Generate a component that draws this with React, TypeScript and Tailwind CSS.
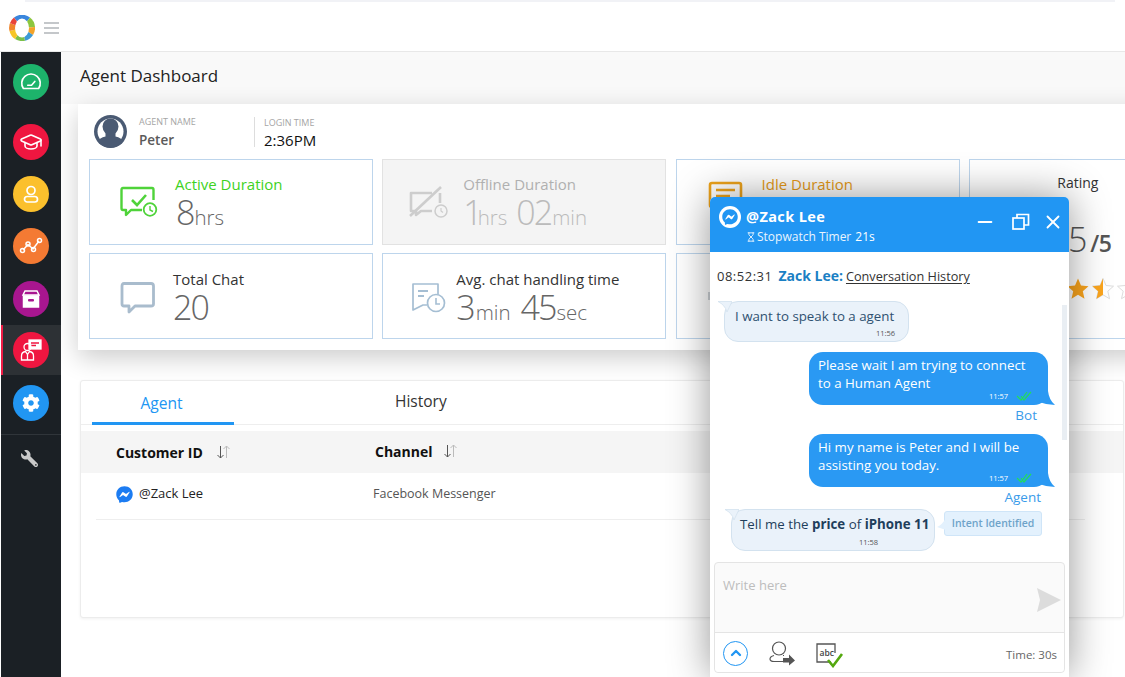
import React from 'react';
import { FaCog, FaFacebookMessenger, FaWrench } from 'react-icons/fa';
import { Hourglass, GraduationCap, ChevronUp, X, Minus } from 'lucide-react';

const Circle: React.FC<{ bg: string; children: React.ReactNode }> = ({ bg, children }) => (
  <div className={`w-9 h-9 rounded-full flex items-center justify-center text-white ${bg}`}>{children}</div>
);

const SideItem: React.FC<{ active?: boolean; className?: string; children: React.ReactNode }> = ({ active, className = '', children }) => (
  <div className={`h-[50px] flex items-center pl-[10px] border-l-2 ${active ? 'bg-[#2d3135] border-[#ef1b45]' : 'border-transparent'} ${className}`}>
    {children}
  </div>
);

const Sidebar = () => (
  <div className="w-[60px] ml-px bg-[#1b2025] pt-[5px] shrink-0">
    <SideItem>
      <Circle bg="bg-[#1db36b]">
        <svg width="24" height="24" viewBox="0 0 22 22" fill="none" stroke="white" strokeWidth="1.5">
          <path d="M4 17 a8.5 8.5 0 1 1 14 0 z" strokeLinejoin="round" />
          <path d="M8 14 h3.5 l3-3.5" strokeLinecap="round" />
        </svg>
      </Circle>
    </SideItem>
    <SideItem className="mt-[10px]">
      <Circle bg="bg-[#ef1640]"><GraduationCap size={24} strokeWidth={1.6} /></Circle>
    </SideItem>
    <SideItem className="mt-[2px]">
      <Circle bg="bg-[#fbc02d]">
        <svg width="20" height="20" viewBox="0 0 20 20" fill="none" stroke="white" strokeWidth="1.7">
          <circle cx="10" cy="6.5" r="4" />
          <rect x="3.5" y="12.5" width="13" height="5.5" rx="2.7" />
        </svg>
      </Circle>
    </SideItem>
    <SideItem className="mt-[2px]">
      <Circle bg="bg-[#f47a33]">
        <svg width="24" height="20" viewBox="0 0 24 20" fill="none" stroke="white" strokeWidth="1.5">
          <path d="M4 14 L9 8.5 L14 13 L20 5" />
          <circle cx="3.5" cy="14.5" r="2" />
          <circle cx="9" cy="8" r="2" />
          <circle cx="14.5" cy="13.5" r="2" />
          <circle cx="20.5" cy="4.5" r="2" />
        </svg>
      </Circle>
    </SideItem>
    <SideItem className="mt-[3px]">
      <Circle bg="bg-[#a8168f]">
        <svg width="22" height="22" viewBox="0 0 22 22" fill="none" stroke="white" strokeWidth="1.5">
          <path d="M5 3 h12 l2 4 H3 z" />
          <rect x="3.5" y="8" width="15" height="11" fill="white" />
          <rect x="8" y="11" width="6" height="2.5" rx="1" fill="#a8168f" stroke="none" />
        </svg>
      </Circle>
    </SideItem>
    <SideItem active className="mt-px">
      <Circle bg="bg-[#ef1640]">
        <svg width="26" height="26" viewBox="0 0 26 26" fill="none" stroke="white" strokeWidth="1.3">
          <rect x="11" y="3" width="12" height="9" fill="white" />
          <path d="M13 6 h8 M13 8.5 h5" stroke="#ef1640" />
          <circle cx="9.5" cy="10" r="3.5" />
          <path d="M3.5 23 v-4 q0-4 4-4.5 l2 3 2-3 q4 .5 4 4.5 v4 z" />
          <path d="M9.5 18 v5" />
        </svg>
      </Circle>
    </SideItem>
    <SideItem className="mt-[3px]">
      <Circle bg="bg-[#2196f3]"><FaCog size={18} /></Circle>
    </SideItem>
    <div className="mt-[6px] border-t border-[#30353a] pt-[15px] flex pl-[20px]">
      <FaWrench size={17} className="text-[#c9c9c9] -scale-x-100" />
    </div>
  </div>
);

const Big: React.FC<{ className?: string; children: React.ReactNode }> = ({ className = '', children }) => (
  <span className={`font-light text-[34px] leading-none tracking-[-2px] ${className}`}>{children}</span>
);
const Unit: React.FC<{ className?: string; children: React.ReactNode }> = ({ className = '', children }) => (
  <span className={`font-light text-[20.500px] leading-none ${className}`}>{children}</span>
);

const StatCard: React.FC<{
  icon: React.ReactNode;
  iconClass: string;
  title: string;
  titleClass?: string;
  muted?: boolean;
  className?: string;
  children?: React.ReactNode;
}> = ({ icon, iconClass, title, titleClass = 'text-[#333]', muted, className = '', children }) => (
  <div className={`h-[86px] border flex items-center ${muted ? 'bg-[#f4f4f4] border-[#e2e2e2]' : 'bg-white border-[#bdd5ec]'} ${className}`}>
    <div className={`shrink-0 flex ${iconClass}`}>{icon}</div>
    <div className="flex flex-col">
      <div className={`text-[15px] leading-[20px] font-medium ${titleClass}`}>{title}</div>
      <div className={`h-[36px] flex items-baseline mt-[1px] ${muted ? 'text-[#bbb]' : 'text-[#666]'}`}>{children}</div>
    </div>
  </div>
);

const Stars = () => {
  const star = 'M12 1.5 L15 8.5 L22.5 9.2 L16.8 14.2 L18.5 21.7 L12 17.8 L5.5 21.7 L7.2 14.2 L1.5 9.2 L9 8.5 Z';
  return (
    <div className="flex justify-center gap-px">
      {[0, 1, 2].map(i => (
        <svg key={i} width="24" height="24" viewBox="0 0 24 24"><path d={star} fill="#fba51d" /></svg>
      ))}
      <svg width="24" height="24" viewBox="0 0 24 24">
        <path d={star} fill="white" stroke="#ddd" />
        <path d="M12 1.5 L9 8.5 L1.5 9.2 L7.2 14.2 L5.5 21.7 L12 17.8 Z" fill="#fba51d" />
      </svg>
      <svg width="24" height="24" viewBox="0 0 24 24"><path d={star} fill="white" stroke="#ddd" /></svg>
    </div>
  );
};

const Stats = () => (
  <div className="grid grid-cols-[284px_284px_284px_284px] gap-x-[9.3px] gap-y-2">
    <StatCard
      title="Active Duration"
      titleClass="text-[#3fd21f]"
      iconClass="ml-[30px] w-[55px]"
      icon={
        <svg width="38" height="32" viewBox="0 0 38 32" fill="none" stroke="#4fd33a" strokeWidth="2.4">
          <path d="M22 24 H11 L6 29 V24 H3 Q1.5 24 1.5 22 V4 Q1.5 2 3 2 H32 Q33.5 2 33.5 4 V14" strokeLinejoin="round" />
          <path d="M12 14 l5 5 9-10" strokeWidth="2.6" />
          <circle cx="30" cy="23.5" r="6.3" strokeWidth="1.8" fill="white" />
          <path d="M30 20 v4 l3 1.5" strokeWidth="1.4" />
        </svg>
      }
    >
      <Big className="ml-[1px]">8</Big><Unit className="ml-[1px]">hrs</Unit>
    </StatCard>
    <StatCard
      muted
      title="Offline Duration"
      titleClass="text-[#b0b0b0]"
      iconClass="ml-[25px] w-[55px]"
      icon={
        <svg width="40" height="34" viewBox="0 0 40 34" fill="none" stroke="#cdcdcd" strokeWidth="2.6">
          <path d="M24 8 H3 V26 H8 V30 L13 26 H24 M32 8 V18" strokeLinejoin="round" />
          <path d="M2 31 L33 2" />
          <circle cx="33" cy="26" r="6" strokeWidth="1.5" fill="#f4f4f4" />
          <path d="M33 23 v3 l2 1.5" strokeWidth="1.2" />
        </svg>
      }
    >
      <Big>1</Big><Unit className="-ml-[3px]">hrs</Unit><Big className="ml-[9px]">02</Big><Unit className="ml-[1px]">min</Unit>
    </StatCard>
    <StatCard
      title="Idle Duration"
      titleClass="text-[#e69a17]"
      iconClass="ml-[31px] w-[54px]"
      icon={
        <svg width="36" height="36" viewBox="0 0 36 36" fill="none" stroke="#eda31c" strokeWidth="2.6" className="-mt-3">
          <rect x="2" y="5" width="31" height="24" rx="2" />
          <path d="M8 12 h19 M8 18 h14" />
        </svg>
      }
    />
    <div className="row-span-2 h-[180px] border border-[#bdd5ec] bg-white flex flex-col items-center pt-[13px] pr-[66px]">
      <div className="text-[14px] leading-[20px] text-[#333]">Rating</div>
      <div className="mt-[29px] h-[40px] flex items-baseline text-[#555]">
        <Big>3.5</Big>
        <span className="ml-[5px] text-[23px] leading-none font-semibold tracking-tight">/5</span>
      </div>
      <div className="mt-[15px]"><Stars /></div>
    </div>
    <StatCard
      className="pt-[3px]"
      title="Total Chat"
      iconClass="ml-[30px] w-[53px]"
      icon={
        <svg width="36" height="34" viewBox="0 0 36 34" fill="none" stroke="#a9bccd" strokeWidth="2.8">
          <path d="M4 2.5 H31 Q33.5 2.5 33.5 5 V23 Q33.5 25 31 25 H15 L9 31 V25 H4 Q2 25 2 23 V5 Q2 2.500 4 2.5 Z" strokeLinejoin="round" />
        </svg>
      }
    >
      <Big>20</Big>
    </StatCard>
    <StatCard
      className="pt-[3px]"
      title="Avg. chat handling time"
      iconClass="ml-[28px] w-[45px]"
      icon={
        <svg width="36" height="32" viewBox="0 0 36 32" fill="none" stroke="#a5bed3" strokeWidth="1.7">
          <path d="M27 13 V2 H2 V28 L12 23 H16" strokeLinejoin="round" />
          <path d="M7 9 h10 M7 14 h6" strokeWidth="1.8" />
          <circle cx="25" cy="21" r="8.500" fill="white" />
          <path d="M25 16 v6 h4" strokeWidth="1.6" />
        </svg>
      }
    >
      <Big>3</Big><Unit className="ml-[2px]">min</Unit><Big className="ml-[10px]">45</Big><Unit className="ml-[1px]">sec</Unit>
    </StatCard>
    <StatCard
      title=""
      iconClass="ml-[31px] w-[54px]"
      icon={
        <svg width="30" height="8" viewBox="0 0 30 8" fill="none" stroke="#cfd4d8" strokeWidth="2">
          <rect x="1" y="1" width="26" height="12" />
        </svg>
      }
    />
  </div>
);

const SortIcon = () => (
  <svg width="15" height="14" viewBox="0 0 15 14" fill="none" strokeWidth="1">
    <path d="M4.500 1 V13 M1.500 10 L4.500 13 L7.500 10" stroke="#555" />
    <path d="M10.500 13 V1 M7.500 4 L10.500 1 L13.500 4" stroke="#bbb" />
  </svg>
);

const Table = () => (
  <div className="mt-[30px] ml-[19px] w-[1044px] h-[238px] bg-white border border-[#ececec] rounded-[3px] shadow-[0_1px_3px_rgba(0,0,0,0.06)]">
    <div className="h-[44px] border-b border-[#eee] pl-[11px] flex">
      <div className="w-[142px] h-[44px] border-b-[3px] border-[#2196f3] text-[15.600px] text-[#2196f3] flex justify-center pt-[10px] pr-[3px] leading-[24px]">Agent</div>
      <div className="ml-[161px] text-[15.500px] leading-[24px] pt-[8px] text-[#333]">History</div>
    </div>
    <div className="mt-[6px] h-[42px] bg-[#f5f5f5] flex items-center text-[14px] font-bold text-[#111]">
      <div className="w-[294px] pl-[35px] flex items-center gap-[13px]">Customer ID <SortIcon /></div>
      <div className="flex items-center gap-[10px] -mt-[2px]">Channel <SortIcon /></div>
    </div>
    <div className="ml-[15px] mr-[38px] h-[47px] border-b border-[#eee] pl-[20px] pb-[4px] flex items-center text-[12.500px]">
      <div className="w-[257px] flex items-center gap-[6px] text-[#222]">
        <FaFacebookMessenger size={17} className="text-[#1c7cf2]" /> <span className="text-[13px]">@Zack Lee</span>
      </div>
      <div className="text-[#555]">Facebook Messenger</div>
    </div>
  </div>
);

const TailLeft: React.FC<{ className?: string }> = ({ className = '' }) => (
  <svg width="14" height="12" viewBox="0 0 14 12" className={`absolute ${className}`}>
    <path d="M0 .5 H14 L9 11 Q7 4 0 .5 Z" fill="#eaf2fa" stroke="#d3e2ef" strokeWidth="0.8" />
  </svg>
);

const Checks = () => (
  <svg width="17" height="10" viewBox="0 0 17 10" fill="none" stroke="#22dd5a" strokeWidth="1.2">
    <path d="M1 5 L5 9 L11 1 M5 5 L8 9 L15 1" />
  </svg>
);

const Outgoing: React.FC<{ lines: string[]; label: string; labelClass: string }> = ({ lines, label, labelClass }) => (
  <div className="flex flex-col items-end">
    <div className="relative w-[239px] h-[53px] mr-[21px] bg-[#2a99f3] rounded-[14px] pl-[9px] pt-[4px] text-white text-[13.300px] leading-[18px]">
      {lines.map(l => <div key={l}>{l}</div>)}
      <div className="absolute right-[15px] bottom-[4px] flex items-center gap-[8px] text-[7.500px] leading-[10px]">11:57 <Checks /></div>
      <svg width="16" height="14" viewBox="0 0 16 14" className="absolute -right-[7px] bottom-0">
        <path d="M2 0 H9 Q10 9 16 14 Q8 14 0 11 Z" fill="#2a99f3" />
      </svg>
    </div>
    <div className={`text-[13.500px] leading-[18px] text-[#3a9bea] mt-px ${labelClass}`}>{label}</div>
  </div>
);

const ChatWindow = () => (
  <div className="absolute left-[710px] top-[197px] w-[359px] h-[480px] bg-white rounded-t-[5px] shadow-[0_0_40px_rgba(0,0,0,0.42)] flex flex-col">
    <div className="h-[55px] shrink-0 bg-[#2196f3] rounded-t-[5px] flex text-white pl-[9px] pr-[5px] pt-[9px]">
      <div className="w-[22px] h-[22px] rounded-full bg-white flex items-center justify-center text-[#2196f3] mr-[5px]">
        <FaFacebookMessenger size={16} />
      </div>
      <div className="flex-1">
        <div className="text-[14.500px] font-bold leading-[22px] tracking-[0.4px]">@Zack Lee</div>
        <div className="text-[12px] leading-[18px] flex items-center">
          <Hourglass size={10} className="mr-[1px]" />
          <span className="opacity-90">Stopwatch Timer</span><span className="ml-[4px] font-medium">21s</span>
        </div>
      </div>
      <div className="flex items-start pt-[5px]">
        <Minus size={22} strokeWidth={2} />
        <svg width="18" height="18" viewBox="0 0 18 18" fill="none" stroke="white" strokeWidth="1.7" className="mt-[2px] ml-[16px]">
          <rect x="1" y="5" width="11" height="11" />
          <path d="M5 5 V1.500 H16.500 V12 H12" />
        </svg>
        <X size={22} strokeWidth={2} className="ml-[12px]" />
      </div>
    </div>

    <div className="relative flex-1 flex flex-col">
      <div className="absolute left-[352px] top-[53px] w-[5px] h-[135px] bg-[#e9eef3]" />
      <div className="pl-[7px] pt-[15px] text-[12.700px] leading-[18px] text-[#333] flex">
        <span className="tracking-[0.5px] text-[13px]">08:52:31</span>
        <span className="ml-[6px] font-bold text-[#1a7fc4] text-[14px]">Zack Lee:</span>
        <span className="ml-[3px] underline underline-offset-2">Conversation History</span>
      </div>
      <div className="relative mt-[16px] ml-[14px] w-[185px] h-[41px] bg-[#eaf2fa] border border-[#d3e2ef] rounded-[14px] pl-[10px] pt-[4px] text-[13.300px] leading-[20px] text-[#2f5170]">
        <TailLeft className="-left-[7px] -top-px" />
        <span className="relative">I want to speak to a agent</span>
        <div className="absolute right-[13px] bottom-[3px] text-[7.500px] leading-[10px] text-[#555]">11:56</div>
      </div>
      <div className="mt-[10px] flex flex-col gap-[10px]">
        <Outgoing lines={['Please wait I am trying to connect', 'to a Human Agent']} label="Bot" labelClass="mr-[32px]" />
        <Outgoing lines={['Hi my name is Peter and I will be', 'assisting you today.']} label="Agent" labelClass="mr-[28px]" />
      </div>
      <div className="mt-[3px] flex items-start">
        <div className="relative ml-[21px] w-[204px] h-[42px] bg-[#eaf2fa] border border-[#d3e2ef] rounded-[14px] pl-[8px] pt-[4px] text-[13.300px] leading-[20px] text-[#1f3f5c] whitespace-nowrap">
          <TailLeft className="-left-[7px] -top-px" />
          <span className="relative">Tell me the <b>price</b> of <b>iPhone 11</b></span>
          <div className="absolute left-[127px] bottom-[3px] text-[7.500px] leading-[10px] text-[#555]">11:58</div>
        </div>
        <div className="relative ml-[9px] mt-[2px] w-[98px] h-[25px] bg-[#e3f1fd] border border-[#cfe5f8] rounded-[3px] flex items-center justify-center text-[10.500px] font-semibold text-[#6ea3c9]">
          <svg width="9" height="12" viewBox="0 0 9 12" className="absolute -left-[8px] top-[6px]">
            <path d="M9 0 V12 L0 9 Q5 7 9 0 Z" fill="#e3f1fd" />
          </svg>
          Intent Identified
        </div>
      </div>

      <div className="mt-[11px] mx-[4px] h-[111px] bg-[#fafafa] border border-[#e4e4e4] rounded-[4px] flex flex-col">
        <div className="h-[70px] shrink-0 border-b border-[#e4e4e4] pl-[8px] pt-[12px] text-[13px] leading-[20px] text-[#bdbdbd] flex justify-between">
          Write here
          <svg width="24" height="24" viewBox="0 0 24 24" className="mr-[3px] mt-[13px]">
            <path d="M0 0 L24 12 L0 24 L3 12 Z" fill="#dcdcdc" />
          </svg>
        </div>
        <div className="flex-1 flex items-center pl-[8px] pr-[7px] pt-[1px] bg-white rounded-b-[4px]">
          <div className="w-[25px] h-[25px] rounded-full border-[1.5px] border-[#2196f3] text-[#2196f3] flex items-center justify-center">
            <ChevronUp size={16} strokeWidth={3.5} />
          </div>
          <svg width="27" height="25" viewBox="0 0 27 25" fill="none" stroke="#555" strokeWidth="1.2" className="ml-[21px]">
            <circle cx="10" cy="7.500" r="6.500" />
            <path d="M14 20.500 H5 Q1 20.500 1 18 Q1 15.500 5 14.500 M15 14.500 H14" />
            <path d="M14 17 h6 v-3.500 l6 6 -6 5 v-3 h-6 z" fill="#555" stroke="none" />
          </svg>
          <svg width="28" height="25" viewBox="0 0 28 25" fill="none" className="ml-[20px] mt-[4px]">
            <path d="M15 19 H1 V1 H19 V10" stroke="#555" strokeWidth="1.3" />
            <text x="3.500" y="12.500" fontSize="8.500" fontFamily="Open Sans" fontWeight="600" fill="#444">abc</text>
            <path d="M12 17 l5 6 L26 11" stroke="#54a80f" strokeWidth="2.6" />
          </svg>
          <span className="ml-auto mt-[3px] text-[11.500px] text-[#666]">Time: 30s</span>
        </div>
      </div>
    </div>
  </div>
);

// rainbow wedges under a white oval hole
const Logo = () => (
  <svg width="26" height="26" viewBox="0 0 26 26">
    <path d="M13 13 L5 2.500 A13 13 0 0 1 21 2.500 Z" fill="#3a86dd" />
    <path d="M13 13 L21 2.500 A13 13 0 0 1 26 12 Z" fill="#8cc63f" />
    <path d="M13 13 L26 12 A13 13 0 0 1 24 20 Z" fill="#f2a32a" />
    <path d="M13 13 L24 20 A13 13 0 0 1 16 25.700 Z" fill="#3c9ad6" />
    <path d="M13 13 L16 25.700 A13 13 0 0 1 6 24 Z" fill="#7cc04a" />
    <path d="M13 13 L6 24 A13 13 0 0 1 .5 16 Z" fill="#f7c525" />
    <path d="M13 13 L.5 16 A13 13 0 0 1 1 8 Z" fill="#f0842c" />
    <path d="M13 13 L1 8 A13 13 0 0 1 5 2.500 Z" fill="#e8433a" />
    <ellipse cx="13" cy="13" rx="7" ry="9.500" fill="white" />
  </svg>
);

export default function App() {
  return (
    <div className="relative w-[1125px] h-[677px] overflow-hidden bg-white font-['Open_Sans',sans-serif] flex flex-col">
      <div className="h-[52px] shrink-0 border-b border-[#e8e8e8]">
        <div className="mx-[25px] mr-[10px] h-[2px] bg-[#f1f2f6]" />
        <div className="h-[49px] flex items-center pl-[9px] pt-[2px]">
          <Logo />
          <div className="ml-[9px] mt-[1px] w-[15px] flex flex-col gap-[3px]">
            <div className="h-[2px] bg-[#c4c7ca]" />
            <div className="h-[2px] bg-[#c4c7ca]" />
            <div className="h-[2px] bg-[#c4c7ca]" />
          </div>
        </div>
      </div>
      <div className="flex-1 flex min-h-0">
        <Sidebar />
        <div className="flex-1 min-w-0 overflow-hidden">
          <div className="h-[52px] bg-[#f9f9f9] pl-[19px] pb-[4px] flex items-center text-[17px] font-medium text-[#222]">Agent Dashboard</div>
          <div className="ml-[17px] w-[1130px] h-[246px] bg-white shadow-[0_8px_24px_rgba(0,0,0,0.2)] pl-[11px]">
            <div className="h-[55px] flex items-center pl-[5px]">
              <svg width="33" height="33" viewBox="0 0 33 33">
                <circle cx="16.500" cy="16.500" r="16.500" fill="#4a5a73" />
                <circle cx="16.500" cy="16.500" r="13" fill="white" />
                <path d="M3.500 26 a16 16 0 0 0 26 0 q-2-3-8-4.500 v-3 q3-3 3-7 a8 8 0 0 0-16 0 q0 4 3 7 v3 q-6 1.500-8 4.500z" fill="#4a5a73" />
              </svg>
              <div className="ml-[12px] w-[115px] pt-[2px]">
                <div className="text-[9px] leading-[12px] text-[#a5a5a5]">AGENT NAME</div>
                <div className="mt-[3px] text-[13.500px] leading-[18px] font-semibold text-[#5a5a5a]">Peter</div>
              </div>
              <div className="w-px h-[30px] bg-[#ddd]" />
              <div className="ml-[9px] pt-[2px]">
                <div className="text-[9px] leading-[12px] text-[#a5a5a5]">LOGIN TIME</div>
                <div className="mt-[2px] text-[15px] leading-[18px] font-medium text-[#111]">2:36PM</div>
              </div>
            </div>
            <Stats />
          </div>
          <Table />
        </div>
      </div>
      <ChatWindow />
    </div>
  );
}
